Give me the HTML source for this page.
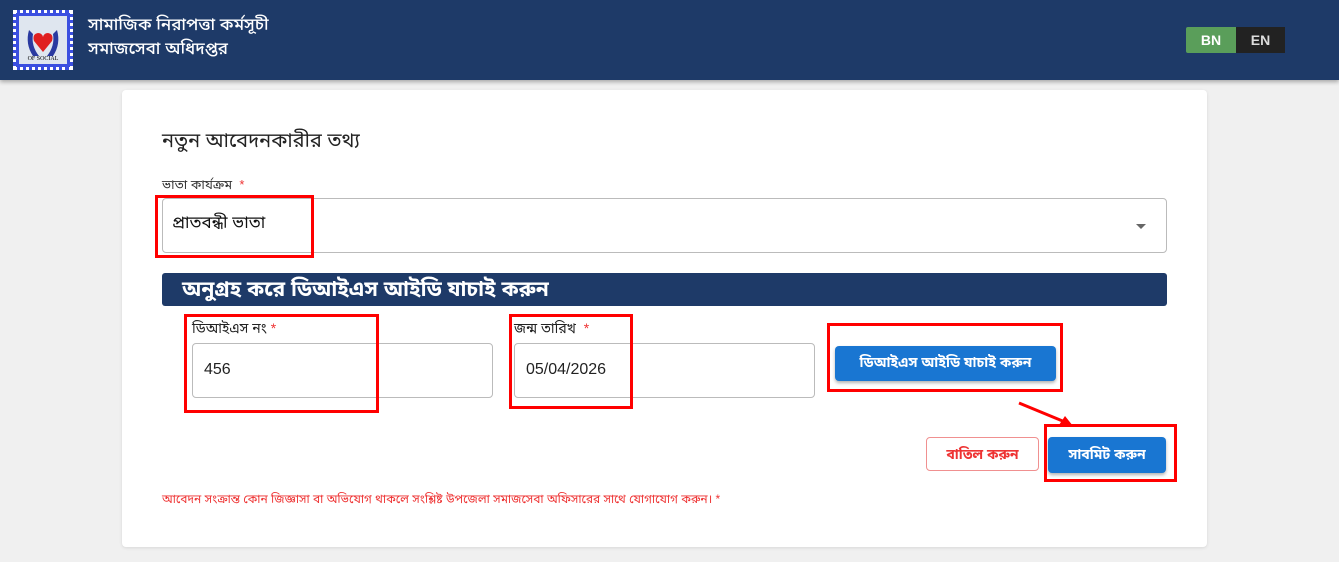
<!DOCTYPE html><html><head><meta charset="utf-8"><style>
*{box-sizing:border-box}body{margin:0;width:1339px;height:562px;background:#f0f0f0;font-family:"Liberation Sans","Noto Sans Bengali","Lohit Bengali",sans-serif;position:relative;overflow:hidden}
.a{position:absolute}
.hdr{left:0;top:0;width:1339px;height:80px;background:#1e3a68;box-shadow:0 2px 4px rgba(0,0,0,.3)}
.card{left:122px;top:90px;width:1085px;height:457px;background:#fff;border-radius:4px;box-shadow:0 1px 3px rgba(0,0,0,.1)}
.red{border:3px solid #f00}
.inp{border:1px solid #bbb;border-radius:4px;background:#fff}
.btn{background:#1976d2;color:#fff;border-radius:4px;box-shadow:0 2px 3px rgba(0,0,0,.3);font-size:14px;font-weight:bold;display:flex;align-items:center;justify-content:center}
</style></head><body>
<div class="a hdr"></div>
<div class="a" style="left:13px;top:10px;width:60px;height:60px;background:#3b4fe0;border:3px dotted #fff"></div>
<div class="a" style="left:19px;top:16px;width:48px;height:48px;background:#dfe6ef"></div>
<svg class="a" style="left:19px;top:16px" width="48" height="48"><path d="M10 14 Q6 28 14 40 L20 40 Q12 30 14 18Z" fill="#2a3aa0"/><path d="M38 14 Q42 28 34 40 L28 40 Q36 30 34 18Z" fill="#2a3aa0"/><path d="M24 36 L15 25 Q13 18 19 17 Q23 17 24 21 Q25 17 29 17 Q35 18 33 25Z" fill="#e02020"/></svg>
<div class="a" style="left:21px;top:56px;width:44px;font-size:6px;color:#000;text-align:center;font-family:'Liberation Serif',serif">OF SOCIAL</div>
<div class="a" style="left:88px;top:13px;color:#fff;font-size:17px;line-height:24px;font-weight:500">সামাজিক নিরাপত্তা কর্মসূচী<br>সমাজসেবা অধিদপ্তর</div>
<div class="a" style="left:1186px;top:27px;width:50px;height:26px;background:#5a9e5a;color:#fff;font-size:14px;font-weight:bold;text-align:center;line-height:26px;border-radius:2px 0 0 2px">BN</div>
<div class="a" style="left:1236px;top:27px;width:49px;height:26px;background:#222;color:#ddd;font-size:14px;font-weight:bold;text-align:center;line-height:26px">EN</div>
<div class="a card"></div>
<div class="a" style="left:162px;top:130px;font-size:20px;color:#222">নতুন আবেদনকারীর তথ্য</div>
<div class="a" style="left:162px;top:177px;font-size:13px;color:#333">ভাতা কার্যক্রম &nbsp;<span style="color:#e33">*</span></div>
<div class="a inp" style="left:162px;top:198px;width:1005px;height:55px"></div>
<div class="a" style="left:172px;top:212px;font-size:17px;color:#111">প্রাতবন্ধী ভাতা</div>
<div class="a" style="left:1136px;top:224px;width:0;height:0;border-left:5px solid transparent;border-right:5px solid transparent;border-top:5px solid #666"></div>
<div class="a red" style="left:155px;top:195px;width:159px;height:63px"></div>
<div class="a" style="left:162px;top:273px;width:1005px;height:33px;background:#1e3a68;border-radius:3px;color:#fff;font-size:21px;font-weight:bold;padding-left:20px;line-height:33px">অনুগ্রহ করে ডিআইএস আইডি যাচাই করুন</div>
<div class="a" style="left:192px;top:320px;font-size:14px;color:#222">ডিআইএস নং <span style="color:#e33">*</span></div>
<div class="a inp" style="left:192px;top:343px;width:301px;height:55px;padding:17px 11px;font-size:16px;color:#222">456</div>
<div class="a red" style="left:184px;top:314px;width:195px;height:99px"></div>
<div class="a" style="left:514px;top:320px;font-size:14px;color:#222">জন্ম তারিখ &nbsp;<span style="color:#e33">*</span></div>
<div class="a inp" style="left:514px;top:343px;width:301px;height:55px;padding:17px 11px;font-size:16px;color:#222">05/04/2026</div>
<div class="a red" style="left:509px;top:314px;width:124px;height:95px"></div>
<div class="a btn" style="left:835px;top:346px;width:221px;height:35px">ডিআইএস আইডি যাচাই করুন</div>
<div class="a red" style="left:827px;top:323px;width:236px;height:69px"></div>
<svg class="a" style="left:1015px;top:398px" width="60" height="32"><line x1="4" y1="5" x2="50" y2="24" stroke="#f00" stroke-width="3"/><polygon points="58,28 44,27 50,18" fill="#f00"/></svg>
<div class="a" style="left:926px;top:437px;width:113px;height:34px;border:1px solid #f09090;border-radius:4px;color:#e33;font-size:14px;font-weight:bold;text-align:center;line-height:32px">বাতিল করুন</div>
<div class="a btn" style="left:1048px;top:437px;width:118px;height:36px">সাবমিট করুন</div>
<div class="a red" style="left:1044px;top:424px;width:133px;height:58px"></div>
<div class="a" style="left:162px;top:492px;font-size:12px;color:#e33">আবেদন সংক্রান্ত কোন জিজ্ঞাসা বা অভিযোগ থাকলে সংশ্লিষ্ট উপজেলা সমাজসেবা অফিসারের সাথে যোগাযোগ করুন। *</div>
</body></html>
